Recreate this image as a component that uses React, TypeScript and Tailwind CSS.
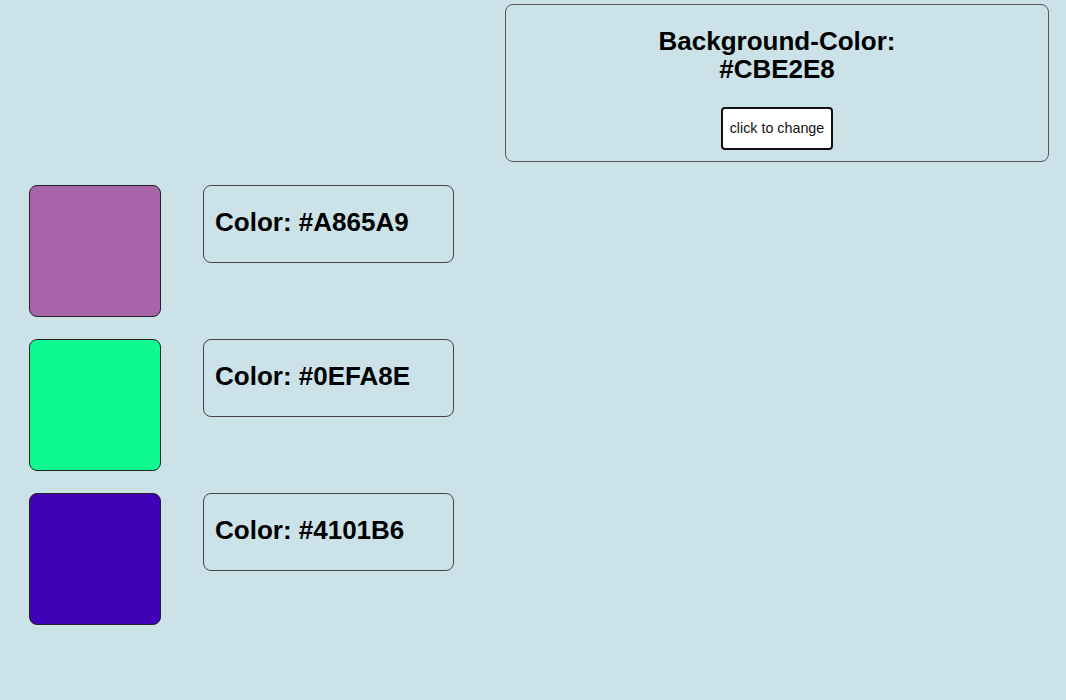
import React, { useState } from 'react';

const COLORS = ['#A865A9', '#0EFA8E', '#4101B6'];

const App: React.FC = () => {
  const [bg] = useState('#CBE2E8');

  return (
    <div
      className="min-h-[700px] w-full bg-[#CBE2E8] text-black"
      style={{ fontFamily: '"Liberation Sans", Arial, sans-serif', backgroundColor: bg }}
    >
      <div className="flex justify-end pt-[4px] pr-[17px]">
        <div className="w-[544px] h-[158px] rounded-[8px] border border-[#555] flex flex-col items-center">
          <h2 className="mt-[22px] text-[26px] font-bold leading-[28px] text-center">
            Background-Color:
            <br />
            #CBE2E8
          </h2>
          <button className="mt-[24px] h-[43px] w-[112px] rounded-[4px] border-2 border-[#111] bg-white text-[14.3px] text-[#111]">
            click to change
          </button>
        </div>
      </div>

      <div className="mt-[23px] flex flex-col gap-[22px] pl-[29px]">
        {COLORS.map((color) => (
          <div className="flex items-start gap-[42px]" key={color}>
            <div
              className="h-[132px] w-[132px] rounded-[8px] border border-[#222]"
              style={{ backgroundColor: color }}
            />
            <div className="w-[251px] h-[78px] rounded-[8px] border border-[#444] px-[11px]">
              <h2 className="mt-[22px] text-[26px] font-bold leading-[28px]">Color: {color}</h2>
            </div>
          </div>
        ))}
      </div>
    </div>
  );
};

export default App;
